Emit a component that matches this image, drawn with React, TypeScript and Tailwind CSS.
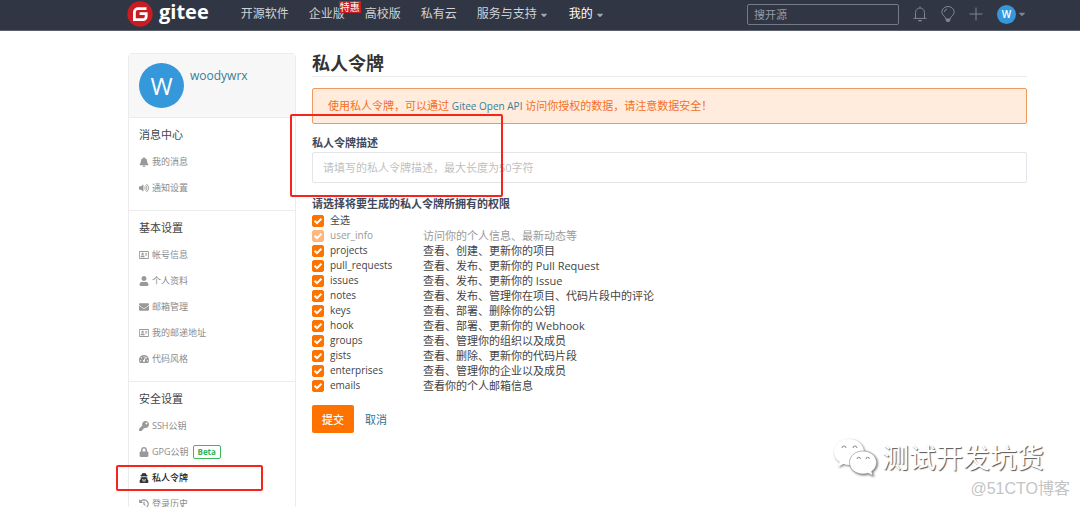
import React from 'react';
import clsx from 'clsx';
import type { IconType } from 'react-icons';
import {
  FaBell,
  FaCaretDown,
  FaEnvelope,
  FaHistory,
  FaKey,
  FaLock,
  FaRegAddressCard,
  FaTachometerAlt,
  FaUser,
  FaUserSecret,
  FaVolumeUp,
} from 'react-icons/fa';

interface MenuItem {
  label: string;
  icon: IconType;
  beta?: boolean;
  active?: boolean;
}

interface MenuSection {
  title: string;
  items: MenuItem[];
}

interface Scope {
  name: string;
  description: string;
  disabled?: boolean;
}

const navLinks = [
  { label: '开源软件' },
  { label: '企业版', badge: '特惠' },
  { label: '高校版' },
  { label: '私有云' },
  { label: '服务与支持', caret: true },
  { label: '我的', caret: true, bright: true },
];

const sections: MenuSection[] = [
  {
    title: '消息中心',
    items: [
      { label: '我的消息', icon: FaBell },
      { label: '通知设置', icon: FaVolumeUp },
    ],
  },
  {
    title: '基本设置',
    items: [
      { label: '帐号信息', icon: FaRegAddressCard },
      { label: '个人资料', icon: FaUser },
      { label: '邮箱管理', icon: FaEnvelope },
      { label: '我的邮递地址', icon: FaRegAddressCard },
      { label: '代码风格', icon: FaTachometerAlt },
    ],
  },
  {
    title: '安全设置',
    items: [
      { label: 'SSH公钥', icon: FaKey },
      { label: 'GPG公钥', icon: FaLock, beta: true },
      { label: '私人令牌', icon: FaUserSecret, active: true },
      { label: '登录历史', icon: FaHistory },
    ],
  },
];

const scopes: Scope[] = [
  { name: '全选', description: '' },
  { name: 'user_info', description: '访问你的个人信息、最新动态等', disabled: true },
  { name: 'projects', description: '查看、创建、更新你的项目' },
  { name: 'pull_requests', description: '查看、发布、更新你的 Pull Request' },
  { name: 'issues', description: '查看、发布、更新你的 Issue' },
  { name: 'notes', description: '查看、发布、管理你在项目、代码片段中的评论' },
  { name: 'keys', description: '查看、部署、删除你的公钥' },
  { name: 'hook', description: '查看、部署、更新你的 Webhook' },
  { name: 'groups', description: '查看、管理你的组织以及成员' },
  { name: 'gists', description: '查看、删除、更新你的代码片段' },
  { name: 'enterprises', description: '查看、管理你的企业以及成员' },
  { name: 'emails', description: '查看你的个人邮箱信息' },
];

const Logo = () => (
  <a href="#" className="flex items-center gap-1.5 text-white">
    <svg viewBox="0 0 26 26" className="size-[26px]" aria-hidden="true">
      <circle cx="13" cy="13" r="12.7" fill="#c71d23" />
      <path
        d="M19.5 7.6H11a3.6 3.6 0 0 0-3.6 3.6v7.4h8.8a3 3 0 0 0 3-3v-3h-6.6"
        fill="none"
        stroke="#fff"
        strokeWidth="2.8"
      />
    </svg>
    <span className="pb-1 text-[20px] leading-6 font-bold">gitee</span>
  </a>
);

const BellIcon = () => (
  <svg viewBox="0 0 14 16" className="h-4 w-3.5" fill="none" stroke="currentColor" aria-hidden="true">
    <path d="M2.5 12V6.5a4.5 4.5 0 0 1 9 0V12M.5 12.4h13M7 .5V2" />
    <path d="M5 14a2 1.6 0 0 0 4 0z" fill="currentColor" stroke="none" />
  </svg>
);

const BulbIcon = () => (
  <svg viewBox="0 0 14 16" className="h-4 w-3.5" fill="none" stroke="currentColor" aria-hidden="true">
    <path d="M4.8 13c0-2.6-4-3.4-4-7a6.2 5.5 0 0 1 12.4 0c0 3.6-4 4.4-4 7zM3.4 6A3.4 3.2 0 0 1 6 3" />
    <path d="M4.8 13h4.4v1.6L8 16H6l-1.2-1.4z" fill="currentColor" stroke="none" />
  </svg>
);

const PlusIcon = () => (
  <svg viewBox="0 0 14 14" className="size-3.5" fill="none" stroke="currentColor" aria-hidden="true">
    <path d="M7 .5v13M.5 7h13" />
  </svg>
);

const Header = () => (
  <header className="flex h-[31px] border-b border-[#5d616c] bg-[#303643] pr-[53px] pb-0.5 pl-[127px] text-[12px] text-[#d0d2d6]">
    <Logo />
    <nav className="ml-8 flex flex-1 items-center gap-5">
      {navLinks.map((link) => (
        <a
          key={link.label}
          href="#"
          className={clsx('relative flex items-center gap-0.5 whitespace-nowrap', link.bright && 'text-white')}
        >
          {link.label}
          {link.caret && <FaCaretDown className="mt-0.5 size-2.5 text-[#a4a7af]" />}
          {link.badge && (
            <span className="absolute -top-1 left-[30px] z-10 bg-[#c71d23] px-px text-[10px] leading-3 text-white">
              {link.badge}
            </span>
          )}
        </a>
      ))}
    </nav>
    <div className="flex items-center gap-3.5 text-[#7f8592]">
      <input
        type="search"
        aria-label="搜开源"
        placeholder="搜开源"
        className="h-[21px] w-38 rounded-xs border border-[#747a88] bg-transparent px-1.5 text-[11px] outline-none placeholder:text-[#969ba6]"
      />
      <button type="button" aria-label="通知">
        <BellIcon />
      </button>
      <button type="button" aria-label="动态">
        <BulbIcon />
      </button>
      <button type="button" aria-label="新建">
        <PlusIcon />
      </button>
      <button type="button" aria-label="账户" className="flex items-center gap-px">
        <span className="flex size-[19px] items-center justify-center rounded-full bg-[#3498db] text-[10px] font-semibold text-white">
          W
        </span>
        <FaCaretDown className="size-2.5" />
      </button>
    </div>
  </header>
);

const Sidebar = () => (
  <aside className="mt-[22px] w-42 shrink-0 rounded-t-sm border border-[#ececec]">
    <div className="flex h-[63px] gap-1.5 bg-[#f7f7f7] pt-[9px] pl-2.5">
      <span className="flex size-[45px] items-center justify-center rounded-full bg-[#3498db] text-[24px] text-white">
        W
      </span>
      <a href="#" className="pt-1 text-[12px] leading-[18px] text-[#387d97]">
        woodywrx
      </a>
    </div>
    {sections.map((section) => (
      <section key={section.title} className="border-t border-[#ececec] pb-[9px] pl-2.5">
        <h2 className="flex h-[31px] items-center pt-1 text-[11px] text-[#444]">{section.title}</h2>
        <ul>
          {section.items.map(({ label, icon: Icon, beta, active }) => (
            <li key={label} className="relative flex h-[26px] items-center">
              <a
                href="#"
                className={clsx(
                  'flex items-center gap-[3px] text-[9px]',
                  active ? 'font-medium text-[#222]' : 'text-[#8b8b8b]'
                )}
              >
                <Icon className={clsx('size-2.5', active ? 'text-[#333]' : 'text-[#999]')} />
                {label}
                {beta && (
                  <span className="ml-px rounded-xs border border-[#3cb963] px-1 text-[8px] leading-3 font-bold text-[#2fb457]">
                    Beta
                  </span>
                )}
              </a>
              {active && (
                <span className="pointer-events-none absolute top-0 -left-[23px] h-full w-[147px] rounded-xs border-2 border-[#f8231b]" />
              )}
            </li>
          ))}
        </ul>
      </section>
    ))}
  </aside>
);

const ScopeRow: React.FC<Scope> = ({ name, description, disabled }) => (
  <li>
    <label className={clsx('flex h-[15px] items-center', disabled ? 'text-[#999]' : 'text-[#444]')}>
      <span className={clsx('mr-1.5 grid size-3 shrink-0', disabled && 'opacity-50')}>
        <input
          type="checkbox"
          defaultChecked
          disabled={disabled}
          className="peer col-start-1 row-start-1 size-3 appearance-none rounded-xs border border-[#fe7300] checked:bg-[#fe7300]"
        />
        <svg
          viewBox="0 0 12 12"
          className="pointer-events-none invisible col-start-1 row-start-1 size-3 peer-checked:visible"
          fill="none"
          stroke="#fff"
          strokeWidth="2"
          aria-hidden="true"
        >
          <path d="M2.6 5.8 5 8.2l4.4-4.4" />
        </svg>
      </span>
      <span className="w-[93px] shrink-0 text-[10px]">{name}</span>
      <span className="whitespace-nowrap">{description}</span>
    </label>
  </li>
);

const TokenForm = () => (
  <form className="text-[11px] leading-[15px]" onSubmit={(e) => e.preventDefault()}>
    <div className="relative mt-[11px]">
      <label htmlFor="token-note" className="block font-semibold text-[#40485b]">
        私人令牌描述
      </label>
      <input
        id="token-note"
        type="text"
        maxLength={50}
        placeholder="请填写的私人令牌描述，最大长度为50字符"
        className="mt-0.5 block h-[31px] w-full rounded-xs border border-[#e3e5ea] px-2.5 outline-none placeholder:text-[#bfbfbf]"
      />
      {/* Callout around the description field */}
      <span className="pointer-events-none absolute -top-[21px] -left-[22px] h-[83px] w-[213px] rounded-xs border-2 border-[#f8231b]" />
    </div>
    <fieldset className="mt-[13px]">
      <legend className="mb-0.5 font-semibold text-[#40485b]">请选择将要生成的私人令牌所拥有的权限</legend>
      <ul>
        {scopes.map((scope) => (
          <ScopeRow key={scope.name} {...scope} />
        ))}
      </ul>
    </fieldset>
    <div className="mt-3 flex items-center gap-[11px]">
      <button type="submit" className="h-7 w-[42px] rounded-xs bg-[#fe7300] font-medium text-white">
        提交
      </button>
      <a href="#" className="text-[#2b7391]">
        取消
      </a>
    </div>
  </form>
);

const Watermark = () => (
  <div className="pointer-events-none absolute right-2.5 bottom-2 flex flex-col items-end">
    <div className="mr-[26px] flex items-center gap-1 text-[27px] leading-8 text-white">
      <svg viewBox="0 0 46 42" className="h-[42px] w-[46px] drop-shadow-[1px_1px_1px_#777]" aria-hidden="true">
        <path
          d="M17 2C8.500 2 2 7.700 2 15c0 4.200 2.200 7.700 5.600 10L6 30l5.400-2.900c1.800.6 3.700.9 5.600.9 8.500 0 15-5.800 15-13S25.500 2 17 2z"
          fill="#fff"
        />
        <path
          d="M31 14c-7.700 0-13.500 5-13.500 11.500S23.300 37 31 37c1.700 0 3.400-.3 5-.8l5 2.600-1.400-4.400c3-2 4.900-5.200 4.900-8.900C44.500 19 38.700 14 31 14z"
          fill="#fff"
          stroke="#999"
          strokeWidth=".7"
        />
        <g fill="none" stroke="#888" strokeWidth="1">
          <path d="M10 11a2 2 0 0 1 4 0M21 11a2 2 0 0 1 4 0M25 22a1.700 1.700 0 0 1 3.400 0M34 22a1.700 1.700 0 0 1 3.400 0" />
        </g>
      </svg>
      <span className="[text-shadow:1px_1px_1px_#555]">测试开发坑货</span>
    </div>
    <span className="font-['Liberation_Sans','Noto_Sans_CJK_SC',sans-serif] text-[16px] leading-5 text-[#c4c4c4]">
      @51CTO博客
    </span>
  </div>
);

export default function App() {
  return (
    <div className="relative h-screen overflow-hidden bg-white font-['Open_Sans','Noto_Sans_CJK_SC',sans-serif]">
      <Header />
      <div className="flex gap-4 pr-[53px] pl-32">
        <Sidebar />
        <main className="min-w-0 flex-1 pt-5">
          <h1 className="border-b border-[#ececec] pb-px text-[18px] leading-6 font-bold text-[#333]">私人令牌</h1>
          <p className="mt-[11px] rounded-xs border border-[#f09a60] bg-[#ffecdc] px-[15px] py-[9px] text-[11px] leading-4 text-[#f3701f]">
            使用私人令牌，可以通过{' '}
            <a href="#" className="text-[10px] text-[#387d97]">
              Gitee Open API
            </a>{' '}
            访问你授权的数据，请注意数据安全！
          </p>
          <TokenForm />
        </main>
      </div>
      <Watermark />
    </div>
  );
}
